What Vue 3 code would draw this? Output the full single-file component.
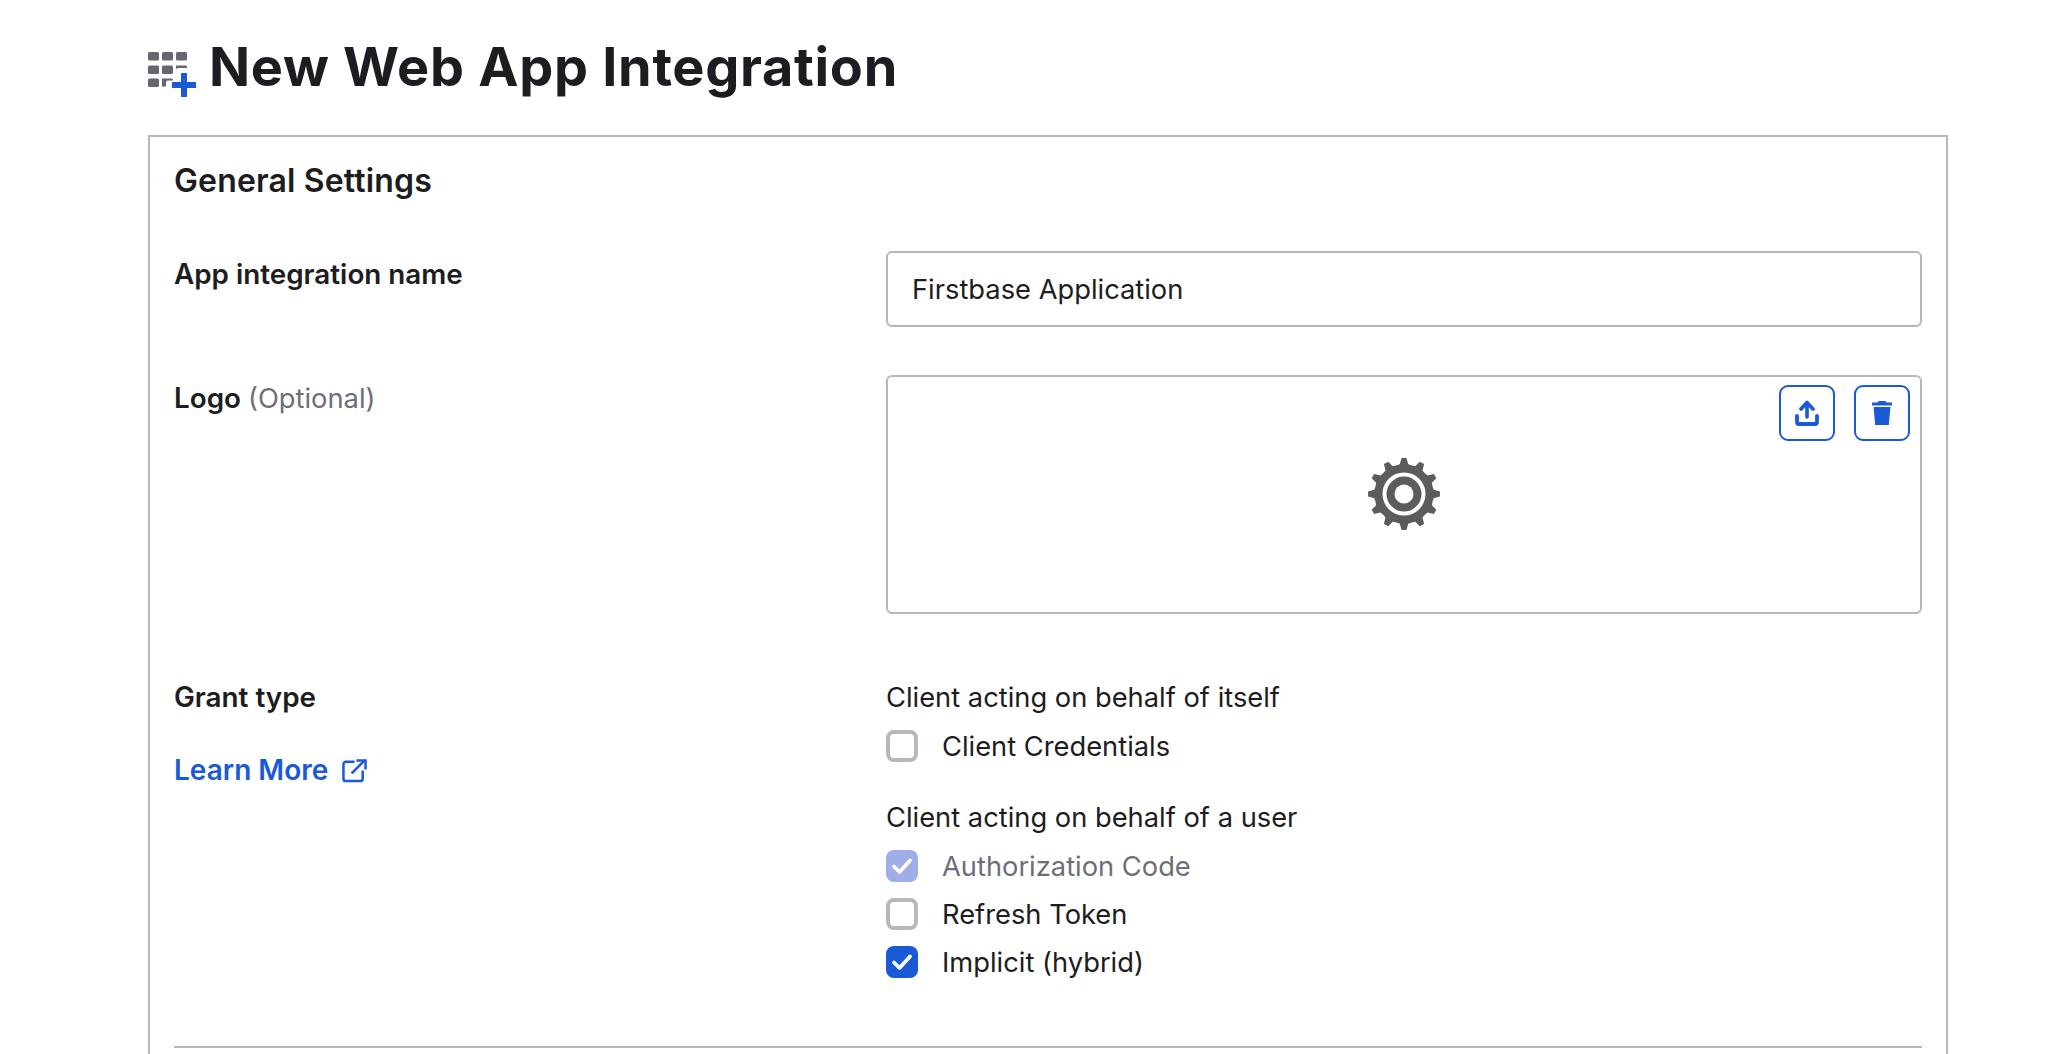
<template>
  <div class="page">
    <header class="head">
      <svg class="head-icon" width="48" height="46" viewBox="0 0 48 46">
        <g fill="#66666e">
          <rect v-for="c in cells" :key="c.x + '-' + c.y" :x="c.x" :y="c.y" width="11" height="8.5" rx="1.5" />
          <path d="M28 13.5h9.5a1.5 1.5 0 0 1 1.500 1.500v1h-9a2 2 0 0 0-2 2v.5z" />
          <path d="M14 26.500h9.500a1.500 1.500 0 0 1 1.500 1.500v.5h-5a2 2 0 0 0-2 2v4h-4z" />
        </g>
        <path d="M33 21h6v9h9v6h-9v9h-6v-9h-9v-6h9z" fill="#1a5ad7" />
      </svg>
      <h1>New Web App Integration</h1>
    </header>
    <section class="card">
      <h2>General Settings</h2>
      <div class="row name-row">
        <div class="label">App integration name</div>
        <div class="input">Firstbase Application</div>
      </div>
      <div class="row logo-row">
        <div class="label">Logo <span class="optional">(Optional)</span></div>
        <div class="logo-box">
          <svg class="gear" width="76" height="76" viewBox="-38 -38 76 76">
            <path :d="gearPath" fill="#5c5c5c" />
            <circle r="19.500" fill="none" stroke="#fff" stroke-width="4" />
            <circle r="9.500" fill="#fff" />
          </svg>
          <div class="logo-actions">
            <button class="icon-btn" type="button">
              <svg width="24" height="26" viewBox="0 0 24 26">
                <path d="M12 17V3M6 9l6-6.500L18 9" fill="none" stroke="#1a5ad7" stroke-width="3.600" stroke-linecap="round" stroke-linejoin="round" />
                <path d="M2 16v6a2 2 0 0 0 2 2h16a2 2 0 0 0 2-2v-6" fill="none" stroke="#1a5ad7" stroke-width="3.800" stroke-linecap="round" />
              </svg>
            </button>
            <button class="icon-btn" type="button">
              <svg width="22" height="26" viewBox="0 0 22 26">
                <path d="M7.500 1h7l1 1.500H21v3H1v-3h5.500z" fill="#1a5ad7" />
                <path d="M2.600 7h16.800l-1.600 18H4.200z" fill="#1a5ad7" />
              </svg>
            </button>
          </div>
        </div>
      </div>
      <div class="row grant-row">
        <div class="grant-left">
          <div class="label grant-label">Grant type</div>
          <a class="learn" href="#" @click.prevent>
            Learn More
            <svg width="25" height="25" viewBox="0 0 26 26" fill="none" stroke="#1a5ad7" stroke-width="2.600">
              <path d="M12 4H4a2.500 2.500 0 0 0-2.500 2.500v15A2.500 2.500 0 0 0 4 24h15a2.500 2.500 0 0 0 2.500-2.500V14" stroke-linecap="round" />
              <path d="M10 16 23 3" />
              <path d="M15 2.500h9.500V12" />
            </svg>
          </a>
        </div>
        <div class="grant-right">
          <div v-for="g in groups" :key="g.title" class="group">
            <div class="group-title">{{ g.title }}</div>
            <label v-for="o in g.options" :key="o.text" class="check" :class="{ muted: o.state === 'disabled' }">
              <span class="box" :class="o.state">
                <svg v-if="o.state !== 'off'" width="22" height="18" viewBox="0 0 22 18">
                  <path d="M3 9.500 8.500 15 19 3.500" fill="none" stroke="#fff" stroke-width="3.800" stroke-linecap="round" stroke-linejoin="round" />
                </svg>
              </span>
              <span>{{ o.text }}</span>
            </label>
          </div>
        </div>
      </div>
      <hr class="divider" />
    </section>
  </div>
</template>

<script setup>
const cells = [
  { x: 0, y: 0 }, { x: 14, y: 0 }, { x: 28, y: 0 },
  { x: 0, y: 13.5 }, { x: 14, y: 13.5 },
  { x: 0, y: 26.5 }
]

const groups = [
  {
    title: 'Client acting on behalf of itself',
    options: [{ text: 'Client Credentials', state: 'off' }]
  },
  {
    title: 'Client acting on behalf of a user',
    options: [
      { text: 'Authorization Code', state: 'disabled' },
      { text: 'Refresh Token', state: 'off' },
      { text: 'Implicit (hybrid)', state: 'on' }
    ]
  }
]

function buildGear() {
  const teeth = 12
  const pts = []
  const step = (Math.PI * 2) / teeth
  for (let i = 0; i < teeth; i++) {
    const a = i * step - Math.PI / 2
    const list = [
      [-0.5, 29.500], [-0.27, 30], [-0.13, 36], [0.13, 36], [0.27, 30], [0.5, 29.500]
    ]
    for (const [t, r] of list) {
      pts.push(`${(Math.cos(a + t * step) * r).toFixed(2)} ${(Math.sin(a + t * step) * r).toFixed(2)}`)
    }
  }
  return 'M' + pts.join('L') + 'Z'
}
const gearPath = buildGear()
</script>

<style>
html, body { margin: 0; background: #fff; overflow: hidden; }
</style>

<style scoped>
.page {
  height: 1054px;
  overflow: hidden;
  padding: 0 122px 0 148px;
  font-family: Inter, "Liberation Sans", sans-serif;
  color: #1d1d21;
  box-sizing: border-box;
}
.head {
  height: 135px;
  display: flex;
  align-items: flex-start;
  gap: 13px;
}
.head-icon { margin-top: 52px; flex: none; }
h1 {
  margin: 34px 0 0;
  font-size: 54px;
  line-height: 66px;
  font-weight: 700;
  letter-spacing: 0.7px;
}
.card {
  border: 2px solid #b7b7bc;
  padding: 0 24px;
  height: 1100px;
  box-sizing: border-box;
}
h2 {
  margin: 24px 0 0;
  font-size: 32px;
  line-height: 40px;
  font-weight: 600;
  letter-spacing: 0.15px;
}
.row {
  display: grid;
  grid-template-columns: 712px 1fr;
}
.name-row { margin-top: 50px; }
.logo-row { margin-top: 48px; }
.grant-row { margin-top: 65px; }
.label {
  font-size: 27.800px;
  line-height: 44px;
  font-weight: 600;
  margin-top: 1px;
}
.logo-row .label { margin-top: 1px; }
.grant-label { margin-top: -4px; }
.optional { font-weight: 400; font-size: 27.300px; color: #6e6e78; }
.input {
  height: 76px;
  border: 2px solid #b7b7bc;
  border-radius: 6px;
  padding: 0 24px;
  display: flex;
  align-items: center;
  font-size: 27.300px;
  box-sizing: border-box;
}
.logo-box {
  height: 239px;
  border: 2px solid #b7b7bc;
  border-radius: 6px;
  box-sizing: border-box;
  display: flex;
  align-items: center;
  justify-content: center;
  position: relative;
}
.gear { margin-top: -2px; }
.logo-actions {
  position: absolute;
  top: 8px;
  right: 10px;
  display: flex;
  gap: 19px;
}
.icon-btn {
  width: 56px;
  height: 56px;
  border: 2px solid #1a5ad7;
  border-radius: 9px;
  background: #fff;
  padding: 0;
  display: flex;
  align-items: center;
  justify-content: center;
}
.learn {
  display: flex;
  align-items: center;
  gap: 14px;
  margin-top: 29px;
  font-size: 28px;
  line-height: 44px;
  font-weight: 600;
  color: #1a5ad7;
  text-decoration: none;
}
.group + .group { margin-top: 29px; }
.group-title {
  font-size: 27.300px;
  line-height: 44px;
  margin: -3px 0 2px;
}
.check {
  display: flex;
  align-items: center;
  gap: 24px;
  height: 48px;
  font-size: 27.300px;
}
.muted { color: #6e6e78; }
.box {
  width: 32px;
  height: 32px;
  border-radius: 8px;
  box-sizing: border-box;
  display: flex;
  align-items: center;
  justify-content: center;
  flex: none;
}
.box.off { border: 4px solid #b7b7bc; background: #fff; }
.box.disabled { background: #a0aee8; }
.box.on { background: #1a5ad7; }
.divider {
  border: 0;
  border-top: 2px solid #b7b7bc;
  margin: 60px 0 0;
}
</style>
